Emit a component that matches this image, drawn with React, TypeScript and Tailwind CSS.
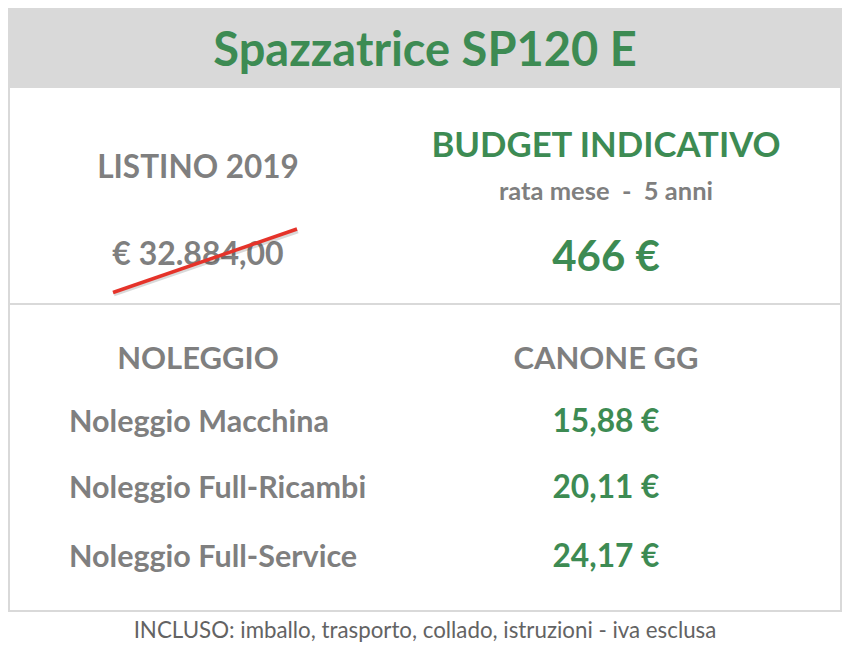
const rows = [
  { label: "Noleggio Macchina", value: "15,88 €", mt: "mt-[32px]" },
  { label: "Noleggio Full-Ricambi", value: "20,11 €", mt: "mt-[34px]" },
  { label: "Noleggio Full-Service", value: "24,17 €", mt: "mt-[38px]" },
];

export default function App() {
  return (
    <div className="w-[852px] h-[654px] bg-white pt-[8px] pl-[8px] font-['Lato',sans-serif]">
      <div className="w-[834px]">
        {/* Header */}
        <div className="h-[80px] bg-[#d9d9d9] flex items-center justify-center">
          <h1 className="text-[47px] leading-none font-bold text-[#3d8b53]">Spazzatrice SP120 E</h1>
        </div>

        <div className="h-[524px] border-x-2 border-b-2 border-[#d9d9d9] flex flex-col">
          {/* Listino / budget */}
          <div className="relative h-[215px] grid grid-cols-[376px_1fr]">
            <div className="flex flex-col items-center">
              <div className="mt-[63px] text-[31.5px] leading-none font-bold text-[#7f7f7f]">LISTINO 2019</div>
              <div className="mt-[54px] text-[32px] leading-none font-bold text-[#7f7f7f]">€ 32.884,00</div>
            </div>
            <div className="flex flex-col items-center pr-[14px]">
              <div className="mt-[39px] text-[34.7px] leading-none font-bold text-[#3d8b53]">BUDGET INDICATIVO</div>
              <div className="mt-[16px] text-[25.5px] leading-none font-bold text-[#7f7f7f] whitespace-pre">rata mese  -  5 anni</div>
              <div className="mt-[31px] text-[42px] leading-none font-bold text-[#3d8b53]">466 €</div>
            </div>
            <svg className="absolute left-[0px] top-[0px] pointer-events-none" width="400" height="215" viewBox="0 0 400 215">
              <line x1="103" y1="205" x2="287" y2="142" stroke="#000" strokeOpacity="0.15" strokeWidth="3.5" transform="translate(1 1.5)" />
              <line x1="103" y1="204.5" x2="287" y2="141" stroke="#e5332a" strokeWidth="3.5" />
            </svg>
          </div>

          <div className="h-[2px] bg-[#d9d9d9]" />

          {/* Noleggio */}
          <div className="grid grid-cols-[376px_1fr]">
            <div className="mt-[37px] text-[31px] leading-none font-bold text-[#7f7f7f] text-center">NOLEGGIO</div>
            <div className="mt-[37px] text-[31px] leading-none font-bold text-[#7f7f7f] text-center pr-[14px]">CANONE GG</div>
            {rows.map((r) => (
              <div key={r.label} className="contents">
                <div className={`${r.mt} pl-[59px] text-[30.5px] leading-none font-bold text-[#7f7f7f]`}>{r.label}</div>
                <div className={`${r.mt} pr-[14px] text-[31.7px] leading-none font-bold text-[#3d8b53] text-center`}>{r.value}</div>
              </div>
            ))}
          </div>
        </div>

        <p className="mt-[7px] text-[22.3px] leading-none text-[#636363] text-center">
          INCLUSO: imballo, trasporto, collado, istruzioni - iva esclusa
        </p>
      </div>
    </div>
  );
}
